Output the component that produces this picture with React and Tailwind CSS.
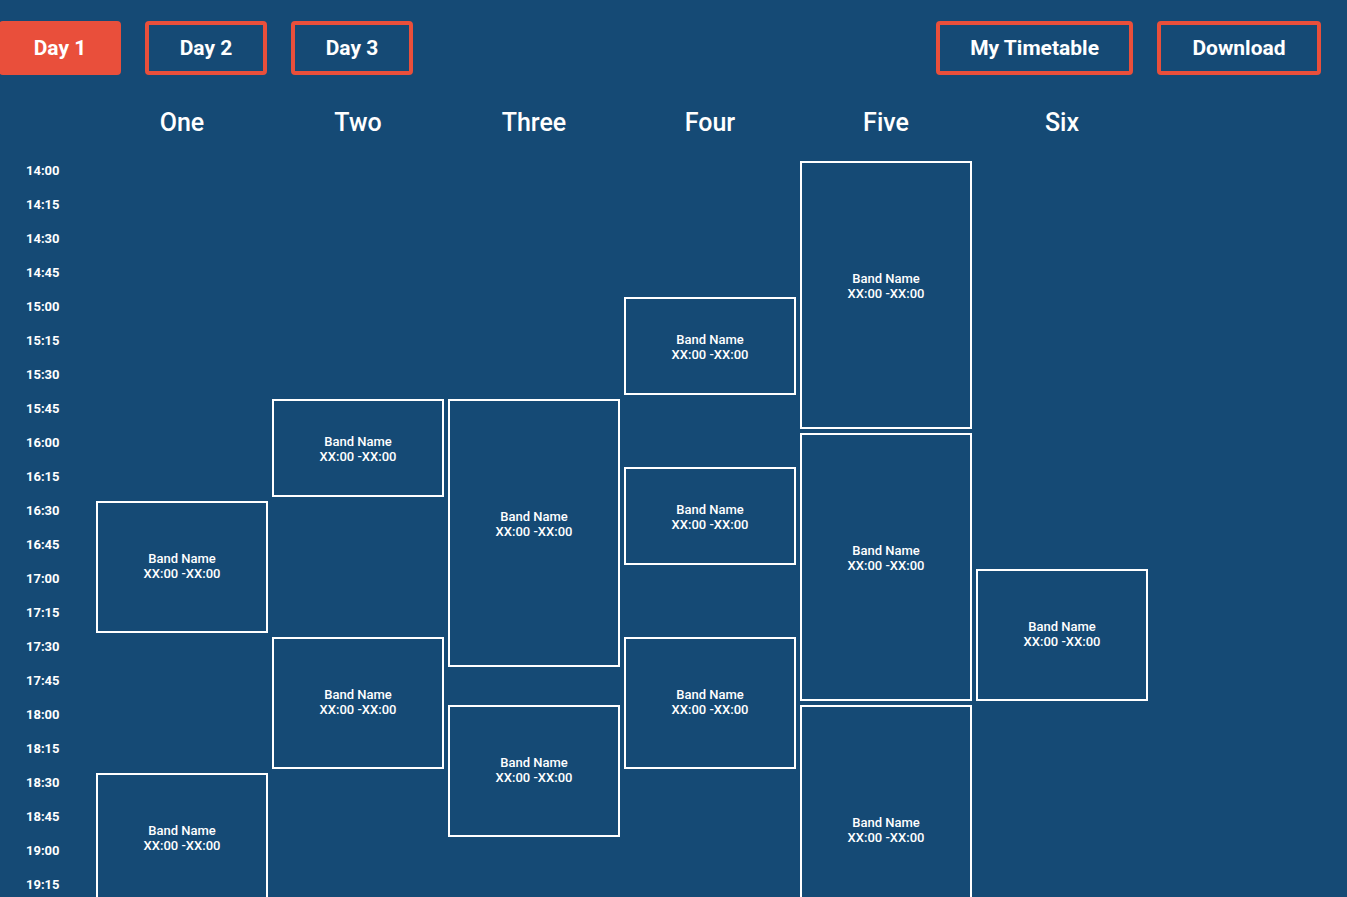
import { useState } from "react";

const DAYS = ["Day 1", "Day 2", "Day 3"];

const FIRST_HOUR = 14;
const SLOT_COUNT = 22;

// start and span are counted in quarter-hour slots from the first hour.
const STAGES = [
  { name: "One", sets: [{ start: 10, span: 4 }, { start: 18, span: 4 }] },
  { name: "Two", sets: [{ start: 7, span: 3 }, { start: 14, span: 4 }] },
  { name: "Three", sets: [{ start: 7, span: 8 }, { start: 16, span: 4 }] },
  { name: "Four", sets: [{ start: 4, span: 3 }, { start: 9, span: 3 }, { start: 14, span: 4 }] },
  { name: "Five", sets: [{ start: 0, span: 8 }, { start: 8, span: 8 }, { start: 16, span: 8 }] },
  { name: "Six", sets: [{ start: 12, span: 4 }] },
];

const LABEL_PADDING = { 3: "pt-[33px]", 4: "pt-[48px]", 8: "pt-[108px]" };

function slotTime(index) {
  const hour = FIRST_HOUR + Math.floor(index / 4);
  const minute = String((index % 4) * 15).padStart(2, "0");
  return `${hour}:${minute}`;
}

function NavButton({ active, wide, children, ...props }) {
  return (
    <button
      type="button"
      className={`h-[54px] cursor-pointer rounded border-4 border-[#e94f3b] px-[30px] text-[21px] leading-[46px] font-bold whitespace-nowrap ${
        wide ? "min-w-[164px]" : "min-w-[122px]"
      } ${active ? "bg-[#e94f3b]" : "bg-transparent"}`}
      {...props}
    >
      {children}
    </button>
  );
}

function SetBox({ start, span }) {
  return (
    <div
      className={`border-2 border-white text-center text-[13px] leading-[15px] font-medium ${LABEL_PADDING[span]}`}
      style={{ gridRow: `${start + 1} / span ${span}` }}
    >
      <p>Band Name</p>
      <p>XX:00 -XX:00</p>
    </div>
  );
}

export default function App() {
  const [day, setDay] = useState(DAYS[0]);
  const slots = Array.from({ length: SLOT_COUNT }, (_, i) => slotTime(i));

  return (
    <div className="min-h-screen bg-[#154a75] font-[Roboto,sans-serif] text-white">
      <header className="flex justify-between gap-6 pt-[21px] pr-[26px]">
        <nav className="-ml-px flex gap-6">
          {DAYS.map((d) => (
            <NavButton key={d} active={d === day} aria-pressed={d === day} onClick={() => setDay(d)}>
              {d}
            </NavButton>
          ))}
        </nav>
        <div className="flex gap-6">
          <NavButton wide>My Timetable</NavButton>
          <NavButton wide>Download</NavButton>
        </div>
      </header>

      <main className="flex gap-1 pt-8 pl-[26px]">
        <ol className="grid w-[66px] shrink-0 auto-rows-[30px] content-start gap-1 pt-[54px] text-[13px] leading-5 font-bold">
          {slots.map((t) => (
            <li key={t}>
              <time>{t}</time>
            </li>
          ))}
        </ol>
        {STAGES.map((stage) => (
          <section key={stage.name} className="w-[172px] shrink-0">
            <h2 className="h-[54px] text-center text-[25px] leading-[32px] font-medium">{stage.name}</h2>
            <div className="grid auto-rows-[30px] gap-1">
              {stage.sets.map((set) => (
                <SetBox key={set.start} {...set} />
              ))}
            </div>
          </section>
        ))}
      </main>
    </div>
  );
}
